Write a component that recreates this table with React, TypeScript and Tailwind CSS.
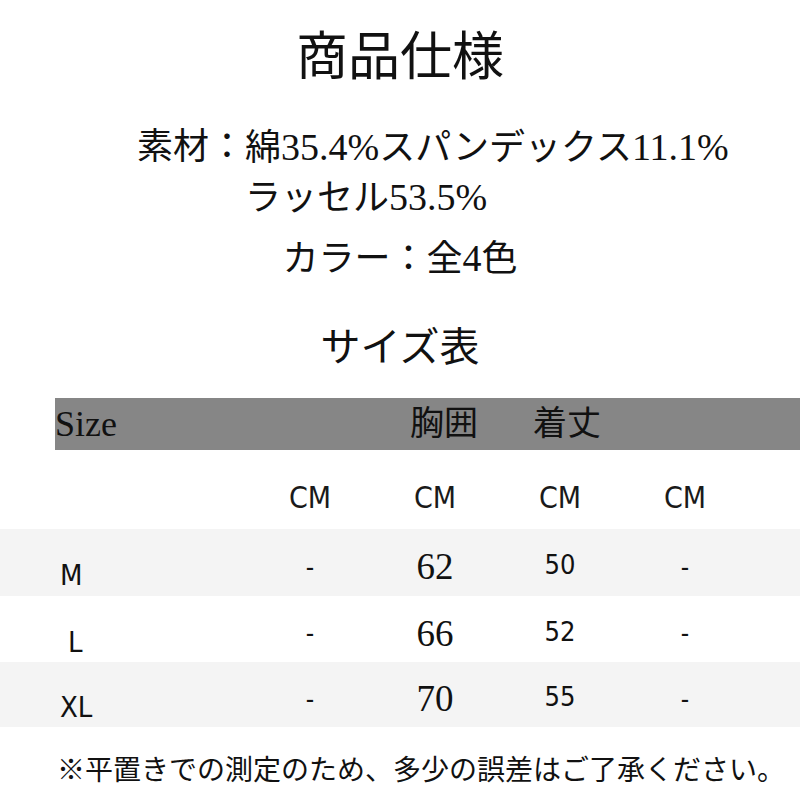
import React from 'react';

const serif = "font-['Liberation_Serif','Noto_Sans_CJK_JP',serif]";
const narrow = "font-['DejaVu_Sans','Noto_Sans_CJK_JP',sans-serif] font-stretch-condensed";

const rows = [
  { size: 'M', chest: '62', length: '50', bg: 'bg-[#f4f4f4]', h: 'h-[67px]' },
  { size: 'L', chest: '66', length: '52', bg: 'bg-white', h: 'h-[66px]' },
  { size: 'XL', chest: '70', length: '55', bg: 'bg-[#f4f4f4]', h: 'h-[65px]' },
];

const App: React.FC = () => {
  return (
    <div className={`w-[800px] h-[800px] bg-white text-[#111] overflow-hidden ${serif}`}>
      <div className="pt-[32px] text-center text-[52px] leading-[52px]">商品仕様</div>

      <div className="mt-[38px] flex pl-[137px] text-[36px] leading-[50px]">
        <div>素材：</div>
        <div>
          <div className="h-[50px]">
            綿<span className="text-[38px]">35.4%</span>スパンデックス<span className="text-[38px]">11.1%</span>
          </div>
          <div className="h-[50px]">
            ラッセル<span className="text-[38px]">53.5%</span>
          </div>
        </div>
      </div>

      <div className="mt-[18px] h-[36px] text-center text-[36px] leading-[36px]">
        カラー：全<span className="text-[38px]">4</span>色
      </div>

      <div className="mt-[52px] text-center text-[40px] leading-[40px]">サイズ表</div>

      <div className="mt-[30px] ml-[55px] h-[52px] bg-[#868686] flex items-center">
        <div className="w-[355px] text-[36px] leading-none">Size</div>
        <div className="w-[123px] text-[34px] leading-none">胸囲</div>
        <div className="text-[34px] leading-none">着丈</div>
      </div>

      <div className={`grid grid-cols-[250px_120px_130px_120px_130px] h-[79px] items-center text-[30px] leading-none text-[#1a1a1a] ${narrow}`}>
        <div />
        <div className="text-center pt-[16px]">CM</div>
        <div className="text-center pt-[16px]">CM</div>
        <div className="text-center pt-[16px]">CM</div>
        <div className="text-center pt-[16px]">CM</div>
      </div>

      {rows.map((r) => (
        <div key={r.size} className={`grid grid-cols-[250px_120px_130px_120px_130px] items-center ${r.bg} ${r.h}`}>
          <div className={`pl-[60px] pt-[26px] text-[29px] leading-none ${narrow}`}>
            {r.size === 'L' ? <span className="pl-[8px]">L</span> : r.size}
          </div>
          <div className={`text-center pt-[8px] text-[26px] leading-none ${narrow}`}>-</div>
          <div className="text-center pt-[8px] text-[37px] leading-none">{r.chest}</div>
          <div className={`text-center pt-[4px] text-[27px] leading-none ${narrow}`}>{r.length}</div>
          <div className={`text-center pt-[8px] text-[26px] leading-none ${narrow}`}>-</div>
        </div>
      ))}

      <div className="mt-[30px] pl-[57px] text-[28px] leading-none whitespace-nowrap">
        ※平置きでの測定のため、多少の誤差はご了承ください。
      </div>
    </div>
  );
};

export default App;
